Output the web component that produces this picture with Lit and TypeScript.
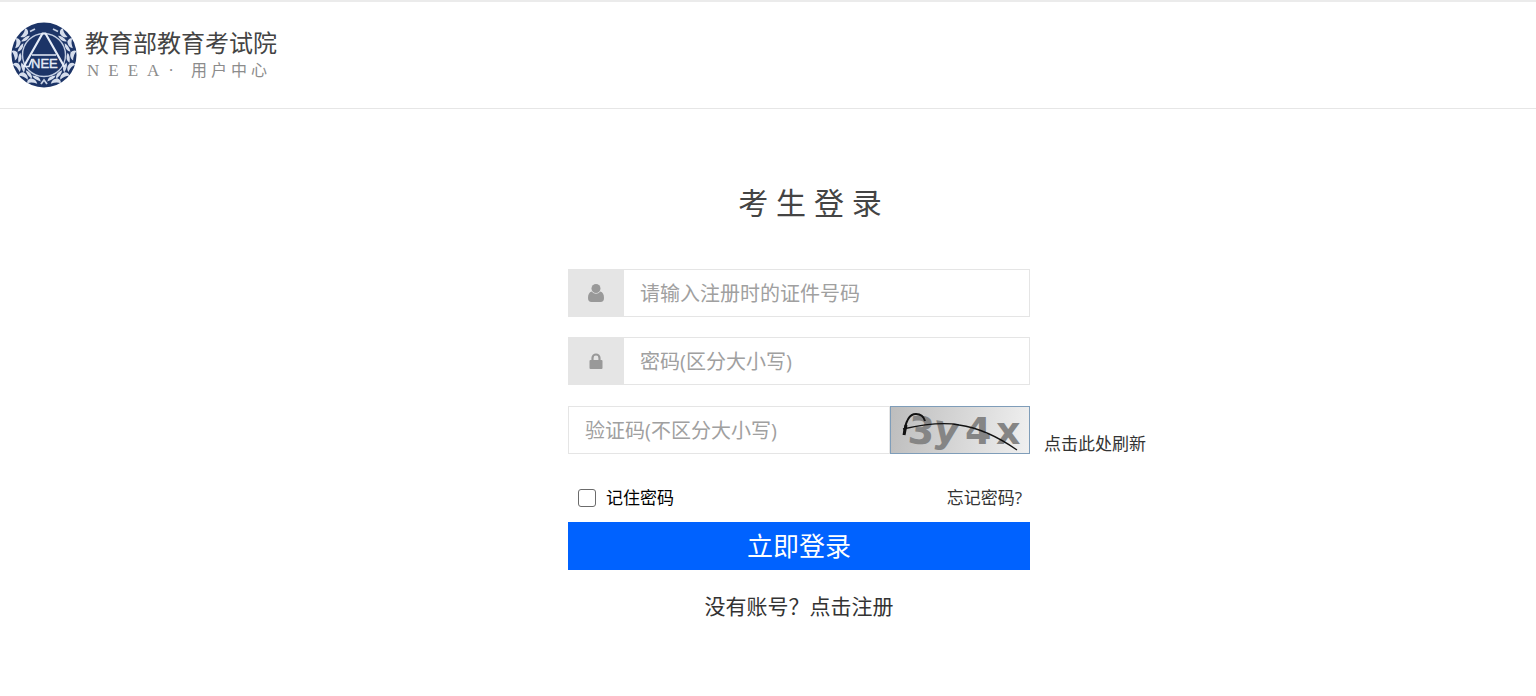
import { LitElement, html, svg, css } from "lit";
import { customElement } from "lit/decorators.js";

// Leaf positions along one half of the wreath, in degrees from the top.
const LEAVES = [46, 70, 94, 118, 140, 160];

@customElement("neea-emblem")
class NeeaEmblem extends LitElement {
  static styles = css`
    :host { display: block; width: 66px; height: 66px; }
    svg { display: block; }
    .ring { fill: none; stroke: #c3cee2; stroke-width: 1.4; }
    .leaf { fill: #d5ddec; }
    .tri { fill: none; stroke: #e6ecf7; stroke-width: 2.2; stroke-linejoin: miter; }
    .thin { stroke-width: 1.6; }
    .name { fill: #e6ecf7; font: 13px "Liberation Sans", sans-serif; stroke: #e6ecf7; stroke-width: 0.4; }
  `;

  private leaf(angle: number) {
    return svg`<g transform="rotate(${angle} 33 33)">
      <path class="leaf" d="M28.500 6.600Q25 3.500 27 0.800Q30.500 3.800 36.500 3.600Q34 7.800 28.500 6.600Z"/>
      <path class="leaf" d="M29 9.600Q32 6.400 39 7Q36 12 29 9.600Z"/>
    </g>`;
  }

  render() {
    return html`<svg width="66" height="66" viewBox="0 0 66 66" role="img" aria-label="NEEA">
      <circle cx="33" cy="33" r="32.500" fill="#1c3467"/>
      ${LEAVES.map((a) => this.leaf(a))}
      <g transform="matrix(-1 0 0 1 66 0)">${LEAVES.map((a) => this.leaf(a))}</g>
      <path d="M19 9.500l5-2.500M47 9.500l-5-2.500M30 62l3-4l3 4" fill="none" stroke="#c6d0e3" stroke-width="1.800"/>
      <circle cx="33" cy="33" r="22" fill="#1c3467"/>
      <circle class="ring" cx="33" cy="33" r="21.500"/>
      <path class="tri" d="M12.500 45L31.500 11.500H34.500L53.500 45"/>
      <path class="tri thin" d="M21 33H45M12.500 44.500H18L21 37"/>
      <text class="name" x="20" y="46">NEE</text>
    </svg>`;
  }
}

@customElement("app-root")
class AppRoot extends LitElement {
  static styles = css`
    :host {
      display: block;
      min-height: 100vh;
      background: #fff;
      color: #333;
      font-family: "Open Sans", "Noto Sans CJK SC", sans-serif;
    }
    * { box-sizing: border-box; }
    a { color: inherit; text-decoration: none; }
    header {
      display: flex;
      align-items: center;
      gap: 8px;
      height: 109px;
      padding: 0 11px;
      border-top: 2px solid #ebebeb;
      border-bottom: 1px solid #e6e6e6;
    }
    .org { font-size: 24px; line-height: 32px; color: #444; }
    .sub {
      padding-left: 2px;
      font-family: "Liberation Serif", "Noto Sans CJK SC", serif;
      font-size: 16px;
      line-height: 24px;
      letter-spacing: 4px;
      color: #8c8c8c;
    }
    .latin { font-size: 17px; letter-spacing: 9px; }
    main { display: flex; justify-content: center; padding: 70px 0 32px 62px; }
    form { width: 462px; }
    h1 {
      margin: 0 0 42px;
      padding-left: 22px;
      text-align: center;
      font-size: 30px;
      line-height: 48px;
      font-weight: 400;
      color: #444;
    }
    .field { display: flex; height: 48px; margin-bottom: 20px; }
    .field.verify { margin: 21px 0 0; }
    .addon {
      display: flex;
      flex: none;
      align-items: center;
      justify-content: center;
      width: 55px;
      background: #e5e5e5;
    }
    .box {
      flex: 1;
      min-width: 0;
      height: 48px;
      padding: 0 16px;
      border: 1px solid #e5e5e5;
      border-radius: 0;
      outline: 0;
      background: #fff;
      color: #333;
      font-family: inherit;
      font-size: 20px;
    }
    .box::placeholder { color: #a0a0a0; opacity: 1; }
    .code { display: flex; flex: 0 0 100%; }
    .captcha {
      flex: none;
      width: 140px;
      height: 48px;
      padding: 0;
      border: 1px solid #7f9db9;
      background: linear-gradient(100deg, #bdbdbd, #f0f0f0);
      cursor: pointer;
    }
    .captcha svg { display: block; overflow: visible; }
    .glyph { font: bold 38px "DejaVu Sans", sans-serif; fill: #858585; }
    .refresh {
      flex: none;
      align-self: flex-end;
      margin-left: 14px;
      font-size: 17px;
      line-height: 20px;
    }
    .options {
      display: flex;
      align-items: center;
      justify-content: space-between;
      height: 48px;
      margin-top: 20px;
      padding: 0 8px 4px 10px;
      font-size: 17px;
    }
    .remember { display: flex; align-items: center; gap: 10px; color: #000; }
    .tick {
      appearance: none;
      width: 18px;
      height: 18px;
      margin: 4px 0 0;
      border: 1px solid #6b6b6b;
      border-radius: 3px;
      background: #fff;
    }
    .tick:checked { background: #0062ff; }
    .submit {
      display: block;
      width: 100%;
      height: 48px;
      padding: 0;
      border: 0;
      background: #0062ff;
      color: #fff;
      font-family: inherit;
      font-size: 26px;
      line-height: 48px;
    }
    .register { margin: 20px 0 0; text-align: center; font-size: 21px; line-height: 32px; }
  `;

  render() {
    return html`
      <header>
        <neea-emblem></neea-emblem>
        <div>
          <div class="org">教育部教育考试院</div>
          <div class="sub"><span class="latin">NEEA·</span> 用户中心</div>
        </div>
      </header>
      <main>
        <form @submit=${(e: Event) => e.preventDefault()}>
          <h1>考 生 登 录</h1>
          <div class="field">
            <label class="addon" for="account" aria-label="证件号码">
              <svg width="16" height="18" viewBox="0 0 16 18" fill="#999">
                <circle cx="8" cy="4.500" r="4.500"/>
                <path d="M3.600 7.500Q8 12 12.400 7.500Q16 8.500 16 14Q16 18 12.500 18H3.500Q0 18 0 14Q0 8.500 3.600 7.500Z"/>
              </svg>
            </label>
            <input class="box" id="account" type="text" placeholder="请输入注册时的证件号码" />
          </div>
          <div class="field">
            <label class="addon" for="password" aria-label="密码">
              <svg width="14" height="16" viewBox="0 0 14 16">
                <path d="M3.500 8V5a3.500 3.500 0 0 1 7 0V8" fill="none" stroke="#999" stroke-width="2.200"/>
                <rect x="0.500" y="7" width="13" height="9" rx="1" fill="#999"/>
              </svg>
            </label>
            <input class="box" id="password" type="password" placeholder="密码(区分大小写)" />
          </div>
          <div class="field verify">
            <div class="code">
              <input class="box" type="text" aria-label="验证码" placeholder="验证码(不区分大小写)" />
              <button class="captcha" type="button" aria-label="验证码图片">
                <svg width="138" height="46" viewBox="0 0 138 46">
                  <g class="glyph">
                    <text x="17" y="37" transform="rotate(5 30 25)">3</text>
                    <text x="43" y="36" transform="rotate(10 56 25)">y</text>
                    <text x="74" y="37">4</text>
                    <text x="105" y="37">x</text>
                  </g>
                  <path d="M13 28Q15 7 25 7Q32 7 34 14" fill="none" stroke="#111" stroke-width="2"/>
                  <path d="M13 28L15 18" stroke="#111" stroke-width="3"/>
                  <path d="M12 22Q48 14 68 18Q96 22 126 43" fill="none" stroke="#111" stroke-width="1.300"/>
                </svg>
              </button>
            </div>
            <a class="refresh" href="#">点击此处刷新</a>
          </div>
          <div class="options">
            <label class="remember"><input class="tick" type="checkbox" />记住密码</label>
            <a href="#">忘记密码?</a>
          </div>
          <button class="submit" type="submit">立即登录</button>
          <p class="register">没有账号&#xFF1F;<a href="#">点击注册</a></p>
        </form>
      </main>
    `;
  }
}
